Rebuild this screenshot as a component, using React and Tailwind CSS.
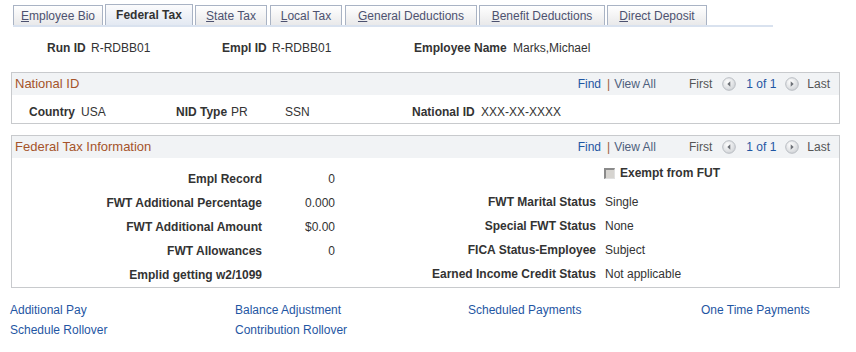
import React from "react";

function Arrow({ dir }) {
  return (
    <svg width="14" height="14" viewBox="0 0 14 14" className="block">
      <defs>
        <radialGradient id={"g" + dir} cx="40%" cy="35%" r="70%">
          <stop offset="0%" stopColor="#ffffff" />
          <stop offset="100%" stopColor="#cfd2d6" />
        </radialGradient>
      </defs>
      <circle cx="7" cy="7" r="6.3" fill={"url(#g" + dir + ")"} stroke="#b9bdc2" strokeWidth="1" />
      {dir === "l" ? (
        <polygon points="8.3,4.3 5.3,7 8.3,9.7" fill="#6d7177" />
      ) : (
        <polygon points="5.7,4.3 8.7,7 5.7,9.7" fill="#6d7177" />
      )}
    </svg>
  );
}

function Tab({ w, active, children }) {
  return (
    <div
      className={
        "mr-[2px] flex items-center justify-center border border-b-0 border-[#a9b3c4] " +
        (active
          ? "h-[21px] bg-gradient-to-b from-[#fbfbfc] to-[#e3e9f2] font-bold text-[#333333]"
          : "h-[20px] bg-gradient-to-b from-white to-[#e9e9ea] text-[#4d5270]")
      }
      style={{ width: w }}
    >
      {children}
    </div>
  );
}

function BoxHeader({ title }) {
  return (
    <div className="flex h-[22px] items-center bg-[#f1f3f5] pl-[3px] pr-[9px]">
      <span className="text-[13px] text-[#a5532a]">{title}</span>
      <div className="ml-auto flex items-center">
        <span className="text-[#1f56a3]">Find</span>
        <span className="ml-[6px] mr-[4px] text-[#9a5a3a]">|</span>
        <span className="text-[#4f5f7d]">View All</span>
        <span className="ml-[33px] text-[#555555]">First</span>
        <span className="ml-[10px]"><Arrow dir="l" /></span>
        <span className="ml-[10px] text-[#1f56a3]">1 of 1</span>
        <span className="ml-[9px]"><Arrow dir="r" /></span>
        <span className="ml-[8px] text-[#555555]">Last</span>
      </div>
    </div>
  );
}

function LRow({ label, value }) {
  return (
    <div className="flex h-[24px] items-center">
      <span className="w-[250px] text-right font-bold text-[#333333]">{label}</span>
      <span className="w-[73px] text-right text-[#333333]">{value}</span>
    </div>
  );
}

function RRow({ label, value }) {
  return (
    <div className="flex h-[24px] items-center">
      <span className="w-[261px] text-right font-bold text-[#333333]">{label}</span>
      <span className="ml-[9px] text-[#333333]">{value}</span>
    </div>
  );
}

export default function App() {
  return (
    <div
      className="h-[352px] w-[856px] bg-white text-[12px] leading-[14px] text-[#333333]"
      style={{ fontFamily: '"Liberation Sans", Arial, sans-serif' }}
    >
      {/* Tabs */}
      <div className="ml-[13px] flex w-[760px] items-end border-b-[2px] border-[#d9e2ef] pt-[4px]">
        <Tab w={90}><span><u>E</u>mployee Bio</span></Tab>
        <Tab w={88} active>Federal Tax</Tab>
        <Tab w={72}><span><u>S</u>tate Tax</span></Tab>
        <div className="w-[1px]" />
        <Tab w={72}><span><u>L</u>ocal Tax</span></Tab>
        <div className="w-[1px]" />
        <Tab w={132}><span><u>G</u>eneral Deductions</span></Tab>
        <Tab w={126}><span><u>B</u>enefit Deductions</span></Tab>
        <Tab w={100}><span><u>D</u>irect Deposit</span></Tab>
      </div>

      {/* Header info */}
      <div className="mt-[13px] flex h-[16px] items-center pl-[47px]">
        <span className="w-[44px] font-bold">Run ID</span>
        <span className="w-[131px]">R-RDBB01</span>
        <span className="w-[50px] font-bold">Empl ID</span>
        <span className="w-[142px]">R-RDBB01</span>
        <span className="w-[99px] font-bold">Employee Name</span>
        <span>Marks,Michael</span>
      </div>

      {/* National ID box */}
      <div className="ml-[11px] mt-[16px] w-[829px] border border-[#c8cacd]">
        <BoxHeader title="National ID" />
        <div className="flex h-[28px] items-center pl-[17px] pt-[5px]">
          <span className="w-[52px] font-bold">Country</span>
          <span className="w-[95px]">USA</span>
          <span className="w-[55px] font-bold">NID Type</span>
          <span className="w-[54px]">PR</span>
          <span className="w-[127px]">SSN</span>
          <span className="w-[69px] font-bold">National ID</span>
          <span>XXX-XX-XXXX</span>
        </div>
      </div>

      {/* Federal Tax Information box */}
      <div className="ml-[11px] mt-[11px] w-[829px] border border-[#c8cacd]">
        <BoxHeader title="Federal Tax Information" />
        <div className="flex h-[129px]">
          <div className="w-[323px] pt-[9px]">
            <LRow label="Empl Record" value="0" />
            <LRow label="FWT Additional Percentage" value="0.000" />
            <LRow label="FWT Additional Amount" value="$0.00" />
            <LRow label="FWT Allowances" value="0" />
            <LRow label="Emplid getting w2/1099" value="" />
          </div>
          <div className="pt-[3px]">
            <div className="flex h-[24px] items-center">
              <span className="w-[261px]" />
              <span className="ml-[8px] box-border h-[11px] w-[11px] border-l-2 border-t-2 border-[#8a8a8a] border-b border-r border-b-[#e0e0e0] border-r-[#e0e0e0] bg-[#d6d4d0]" />
              <span className="ml-[5px] font-bold">Exempt from FUT</span>
            </div>
            <div className="mt-[5px]">
              <RRow label="FWT Marital Status" value="Single" />
              <RRow label="Special FWT Status" value="None" />
              <RRow label="FICA Status-Employee" value="Subject" />
              <RRow label="Earned Income Credit Status" value="Not applicable" />
            </div>
          </div>
        </div>
      </div>

      {/* Links */}
      <div className="mt-[12px] pl-[10px] text-[#1f56a3]">
        <div className="flex h-[20px] items-center">
          <span className="w-[225px]">Additional Pay</span>
          <span className="w-[233px]">Balance Adjustment</span>
          <span className="w-[233px]">Scheduled Payments</span>
          <span>One Time Payments</span>
        </div>
        <div className="flex h-[20px] items-center">
          <span className="w-[225px]">Schedule Rollover</span>
          <span className="w-[233px]">Contribution Rollover</span>
        </div>
      </div>
    </div>
  );
}
